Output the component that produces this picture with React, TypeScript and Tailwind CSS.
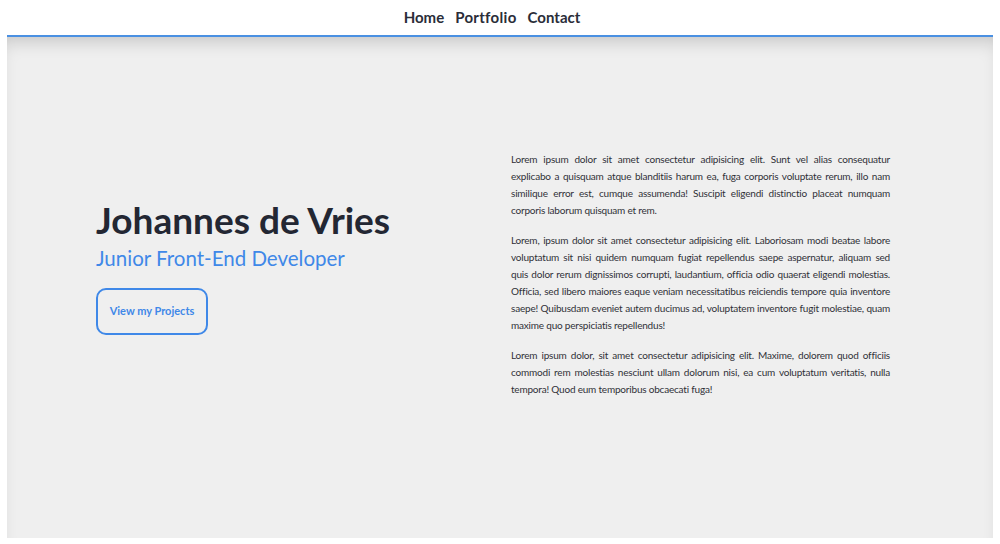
import React from 'react';

const paragraphs = [
  'Lorem ipsum dolor sit amet consectetur adipisicing elit. Sunt vel alias consequatur explicabo a quisquam atque blanditiis harum ea, fuga corporis voluptate rerum, illo nam similique error est, cumque assumenda! Suscipit eligendi distinctio placeat numquam corporis laborum quisquam et rem.',
  'Lorem, ipsum dolor sit amet consectetur adipisicing elit. Laboriosam modi beatae labore voluptatum sit nisi quidem numquam fugiat repellendus saepe aspernatur, aliquam sed quis dolor rerum dignissimos corrupti, laudantium, officia odio quaerat eligendi molestias. Officia, sed libero maiores eaque veniam necessitatibus reiciendis tempore quia inventore saepe! Quibusdam eveniet autem ducimus ad, voluptatem inventore fugit molestiae, quam maxime quo perspiciatis repellendus!',
  'Lorem ipsum dolor, sit amet consectetur adipisicing elit. Maxime, dolorem quod officiis commodi rem molestias nesciunt ullam dolorum nisi, ea cum voluptatum veritatis, nulla tempora! Quod eum temporibus obcaecati fuga!',
];

const App: React.FC = () => {
  return (
    <div className="min-h-screen bg-white px-[7px] pb-[6px] font-['Lato',sans-serif]">
      <header className="h-[37px] flex items-center justify-center gap-[11px] pr-[16px] border-b-2 border-[#4a90e2]">
        <a className="text-[15px] font-bold text-[#2a2d38]">Home</a>
        <a className="text-[15px] font-bold text-[#2a2d38] tracking-[0.3px]">Portfolio</a>
        <a className="text-[15px] font-bold text-[#2a2d38]">Contact</a>
      </header>
      <main className="h-[501px] bg-[#efefef] shadow-[inset_0_12px_18px_-8px_rgba(0,0,0,0.18)] flex items-center">
        <div className="flex items-center w-full pl-[89px] pr-[103px] pb-[26px]">
          <div className="w-[415px] pb-[16px]">
            <h1 className="text-[37px] leading-[44px] font-bold text-[#232733]">Johannes de Vries</h1>
            <h2 className="text-[20.5px] leading-[26px] text-[#3f88e8] mt-[3px]">Junior Front-End Developer</h2>
            <button className="mt-[17px] w-[112px] h-[47px] rounded-[10px] border-2 border-[#3f88e8] text-[11px] font-bold text-[#3f88e8]">
              View my Projects
            </button>
          </div>
          <div className="flex-1 flex flex-col gap-[13px]">
            {paragraphs.map((p, i) => (
              <p key={i} className="text-[10px] tracking-[-0.2px] leading-[17px] text-[#2f3138] text-justify">
                {p}
              </p>
            ))}
          </div>
        </div>
      </main>
    </div>
  );
};

export default App;
